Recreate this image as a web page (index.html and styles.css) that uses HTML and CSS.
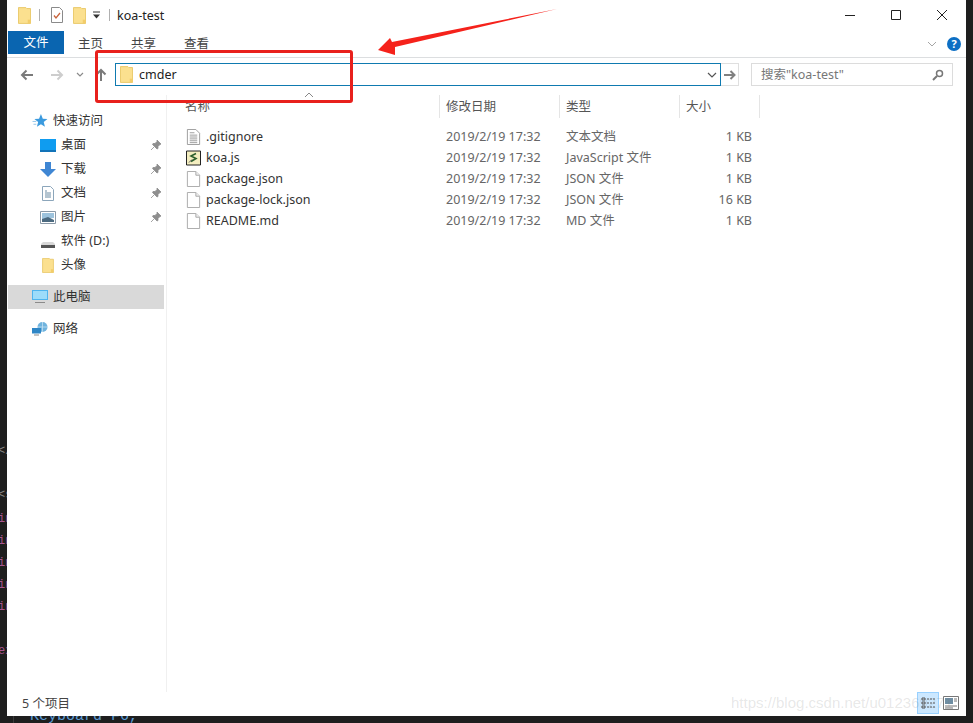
FILE: index.html
```html
<!DOCTYPE html>
<html>
<head>
  <title>koa-test</title>
  <link rel="stylesheet" href="styles.css">
</head>
<body>
  <svg class="defs" width="0" height="0">
    <symbol id="folder" viewBox="0 0 14 18">
      <path d="M.5.5h8l1 1h4v16H.5z" fill="#fbe08f" stroke="#e8c766"/>
      <path d="M10.500 13.500h3v4h-3z" fill="#f3cd6a"/>
    </symbol>
    <symbol id="doc" viewBox="0 0 14 17">
      <path d="M.5.5h9l4 4v12H.5z" fill="#fff" stroke="#a9a9a9"/>
      <path d="M9.500.5v4h4" fill="#eee" stroke="#a9a9a9"/>
    </symbol>
    <symbol id="textdoc" viewBox="0 0 14 17">
      <path d="M.5.5h9l4 4v12H.5z" fill="#fff" stroke="#9a9a9a"/>
      <path d="M3 4h5M3 6.500h8M3 8.500h8M3 10.500h8M3 12.500h8M3 14.500h8" stroke="#9a9a9a" fill="none"/>
    </symbol>
    <symbol id="pin" viewBox="0 0 12 12">
      <path d="M7 1l4 4-1 .5-2 2 0 2-1 .5L2.500 5.500 3 4.500h2l2-2zM4 8l-3 3" fill="#8e8e8e" stroke="#8e8e8e" stroke-width=".8"/>
    </symbol>
  </svg>

  <div class="code-strip">
    <span class="code-line code-grey code-gap">&lt;/</span>
    <span class="code-line code-grey code-gap-small">&lt;s</span>
    <span class="code-line">in</span>
    <span class="code-line">in</span>
    <span class="code-line">in</span>
    <span class="code-line">in</span>
    <span class="code-line code-gap">in</span>
    <span class="code-line">ex</span>
  </div>
  <div class="code-rule"></div>
  <div class="code-bottom">Keyboard F6,</div>

  <div class="window">
    <div class="titlebar">
      <svg class="qa-folder"><use href="#folder"/></svg>
      <span class="qa-sep"></span>
      <svg class="qa-check" viewBox="0 0 12 16">
        <path d="M.5.5h8l3 3v12H.5z" fill="#fff" stroke="#8a8a8a"/>
        <path d="M3 8.500l2 2.500L9 6" fill="none" stroke="#c8643c" stroke-width="1.300"/>
      </svg>
      <svg class="qa-folder2"><use href="#folder"/></svg>
      <svg class="qa-drop" viewBox="0 0 9 8">
        <path d="M1 1h7" stroke="#333" fill="none"/><path d="M1 3.500h7L4.500 7.500z" fill="#333"/>
      </svg>
      <span class="qa-sep qa-sep2"></span>
      <span class="title-text">koa-test</span>
      <div class="win-controls">
        <svg class="win-btn" viewBox="0 0 12 12"><path d="M1 6.500h10" stroke="#222" fill="none"/></svg>
        <svg class="win-btn" viewBox="0 0 12 12"><path d="M1.500 1.500h9v9h-9z" stroke="#222" fill="none"/></svg>
        <svg class="win-btn" viewBox="0 0 12 12"><path d="M1 1l10 10M11 1L1 11" stroke="#222" fill="none"/></svg>
      </div>
    </div>

    <div class="ribbon">
      <div class="ribbon-file">文件</div>
      <div class="ribbon-tab">主页</div>
      <div class="ribbon-tab">共享</div>
      <div class="ribbon-tab">查看</div>
      <div class="ribbon-right">
        <svg class="ribbon-chevron" viewBox="0 0 10 6"><path d="M1 1l4 4 4-4" stroke="#a5a5a5" fill="none"/></svg>
        <span class="help">?</span>
      </div>
    </div>

    <div class="addressbar">
      <svg class="nav-btn nav-back" viewBox="0 0 14 12"><path d="M13 6H2M6.500 1.500L2 6l4.500 4.500" stroke="#7a7a7a" stroke-width="2" fill="none"/></svg>
      <svg class="nav-btn nav-forward" viewBox="0 0 14 12"><path d="M1 6h11M7.500 1.500L12 6l-4.500 4.500" stroke="#cdcdcd" stroke-width="2" fill="none"/></svg>
      <svg class="nav-down" viewBox="0 0 8 5"><path d="M1 1l3 3 3-3" stroke="#8a8a8a" stroke-width="1.200" fill="none"/></svg>
      <svg class="nav-btn nav-up" viewBox="0 0 12 14"><path d="M6 13V2M1.500 6.500L6 2l4.500 4.500" stroke="#7a7a7a" stroke-width="2" fill="none"/></svg>
      <div class="address-input">
        <svg class="address-folder"><use href="#folder"/></svg>
        <span class="address-text">cmder</span>
        <svg class="address-chevron" viewBox="0 0 10 6"><path d="M1 1l4 4 4-4" stroke="#555" stroke-width="1.200" fill="none"/></svg>
      </div>
      <div class="address-go">
        <svg viewBox="0 0 12 10" width="12" height="10"><path d="M0 5h10M6.500 1L10.500 5l-4 4" stroke="#808080" stroke-width="2" fill="none"/></svg>
      </div>
      <div class="search">
        <span>搜索"koa-test"</span>
        <svg class="search-icon" viewBox="0 0 12 12"><circle cx="7.500" cy="4.500" r="3" stroke="#777" stroke-width="1.500" fill="none"/><path d="M5 7l-4 4" stroke="#777" stroke-width="2" fill="none"/></svg>
      </div>
    </div>

    <div class="main">
      <div class="sidebar">
        <div class="nav-item nav-top">
          <svg class="nav-icon" viewBox="0 0 16 15"><path d="M9 0l2 5 5 .4-4 3.300 1.300 5L9 11l-4.300 2.700 1.300-5-4-3.300 5-.4z" fill="#3b9ade"/><path d="M0 8h4M1 11h3" stroke="#8fc3ea"/></svg>
          <span>快速访问</span>
        </div>
        <div class="nav-item nav-sub">
          <svg class="nav-icon" viewBox="0 0 16 13"><path d="M0 0h16v13H0z" fill="#0f9cf0"/><path d="M0 11h16v2H0z" fill="#1273b8"/></svg>
          <span>桌面</span>
          <svg class="pin"><use href="#pin"/></svg>
        </div>
        <div class="nav-item nav-sub">
          <svg class="nav-icon" viewBox="0 0 16 15"><path d="M5 0h6v7h5l-8 8-8-8h5z" fill="#3f86d3"/></svg>
          <span>下载</span>
          <svg class="pin"><use href="#pin"/></svg>
        </div>
        <div class="nav-item nav-sub">
          <svg class="nav-icon" viewBox="0 0 16 15"><path d="M2.500.5h8l3 3v11h-11z" fill="#fff" stroke="#8ca6bb"/><path d="M5 5h2M5 7h6M5 9h6M5 11h6" stroke="#6b8ba3"/></svg>
          <span>文档</span>
          <svg class="pin"><use href="#pin"/></svg>
        </div>
        <div class="nav-item nav-sub">
          <svg class="nav-icon" viewBox="0 0 16 13"><path d="M.5.500h15v12H.5z" fill="#fff" stroke="#8b9aa8"/><path d="M2 2h12v5l-12 1z" fill="#9dc3dd"/><path d="M2 8l6-2 6 3v2H2z" fill="#4c6a80"/></svg>
          <span>图片</span>
          <svg class="pin"><use href="#pin"/></svg>
        </div>
        <div class="nav-item nav-sub">
          <svg class="nav-icon" viewBox="0 0 16 15"><path d="M3 8h10l2 2v4H1v-4z" fill="#d8d8d8"/><path d="M1 11h14v3H1z" fill="#555"/></svg>
          <span>软件 (D:)</span>
        </div>
        <div class="nav-item nav-sub">
          <svg class="nav-icon"><use href="#folder"/></svg>
          <span>头像</span>
        </div>
        <div class="nav-item nav-top nav-selected">
          <svg class="nav-icon" viewBox="0 0 16 14"><path d="M0 0h16v10H0z" fill="#4fb4ee"/><path d="M1 1h14v8H1z" fill="#9ddcfa"/><path d="M3 12h10v1H3z" fill="#8b8b8b"/></svg>
          <span>此电脑</span>
        </div>
        <div class="nav-item nav-top nav-network">
          <svg class="nav-icon" viewBox="0 0 16 14"><circle cx="10.500" cy="5" r="5" fill="#6fb3de"/><path d="M5.500 5h10M10.500 0v10" stroke="#cfe6f5" stroke-width=".7"/><path d="M0 6h9v5.500H0z" fill="#2f86c6"/><path d="M2 13h5" stroke="#888"/></svg>
          <span>网络</span>
        </div>
      </div>

      <div class="content">
        <div class="list-head">
          <div class="head-name">名称</div>
          <div class="head-cell">修改日期</div>
          <div class="head-cell">类型</div>
          <div class="head-cell">大小</div>
        </div>
        <div class="file-row">
          <div class="file-name"><svg class="file-icon"><use href="#textdoc"/></svg>.gitignore</div>
          <div>2019/2/19 17:32</div><div>文本文档</div><div class="file-size">1 KB</div>
        </div>
        <div class="file-row">
          <div class="file-name">
            <svg class="file-icon" viewBox="0 0 15 15"><path d="M.5.500h14v14H.5z" fill="#f4eec0" stroke="#222"/><path d="M10 3L5 5.500l5 2.500-5 3" stroke="#2d5f2d" stroke-width="1.600" fill="none"/><path d="M3 12l3-3" stroke="#555"/></svg>koa.js
          </div>
          <div>2019/2/19 17:32</div><div>JavaScript 文件</div><div class="file-size">1 KB</div>
        </div>
        <div class="file-row">
          <div class="file-name"><svg class="file-icon"><use href="#doc"/></svg>package.json</div>
          <div>2019/2/19 17:32</div><div>JSON 文件</div><div class="file-size">1 KB</div>
        </div>
        <div class="file-row">
          <div class="file-name"><svg class="file-icon"><use href="#doc"/></svg>package-lock.json</div>
          <div>2019/2/19 17:32</div><div>JSON 文件</div><div class="file-size">16 KB</div>
        </div>
        <div class="file-row">
          <div class="file-name"><svg class="file-icon"><use href="#doc"/></svg>README.md</div>
          <div>2019/2/19 17:32</div><div>MD 文件</div><div class="file-size">1 KB</div>
        </div>
      </div>
    </div>

    <div class="statusbar">
      <span class="status-text">5 个项目</span>
      <div class="view-btns">
        <div class="view-btn view-active">
          <svg viewBox="0 0 16 16" width="16" height="16"><path d="M2 3h3v2H2zM2 7h3v2H2zM2 11h3v2H2z" fill="none" stroke="#555"/><path d="M7 4h8M7 8h8M7 12h8" stroke="#555" stroke-dasharray="2 1"/></svg>
        </div>
        <div class="view-btn">
          <svg viewBox="0 0 16 14" width="16" height="14"><path d="M.5.500h15v13H.5z" fill="#fff" stroke="#777"/><path d="M2 2h8v6H2z" fill="#6f8ea3"/><path d="M11 3h3M11 5h3M2 10h12M2 12h8" stroke="#777"/></svg>
        </div>
      </div>
    </div>
  </div>

  <!-- annotations drawn on top of the screenshot -->
  <div class="mark-box"></div>
  <svg class="mark-arrow" viewBox="0 0 180 48" width="180" height="48">
    <path d="M179 1L14 34 12 30 0 42 17 47 17 39z" fill="#f5221b"/>
  </svg>
  <div class="sort-caret">
    <svg viewBox="0 0 10 6" width="10" height="6"><path d="M1 5l4-4 4 4" stroke="#888" fill="none"/></svg>
  </div>
  <div class="watermark">https://blog.csdn.net/u012369271</div>
</body>
</html>
```

FILE: styles.css
```css
html, body {
  height: 100%;
}
body {
  margin: 0;
  position: relative;
  overflow: hidden;
  background-color: #1e1e1e;
  font-family: "Noto Sans", "Noto Sans CJK SC", sans-serif;
  font-size: 12.5px;
  line-height: 16px;
  color: #444;
}
.defs {
  position: absolute;
}
svg {
  display: block;
  flex: none;
}

/* editor behind the window */
.code-strip {
  position: absolute;
  left: -2px;
  top: 440px;
  width: 14px;
  font-family: "Liberation Mono", monospace;
  font-size: 12px;
  line-height: 22px;
  color: #a8558f;
  display: flex;
  flex-direction: column;
}
.code-line {
  height: 22px;
  white-space: nowrap;
}
.code-grey {
  color: #888;
}
.code-gap {
  margin-bottom: 22px;
}
.code-gap-small {
  margin-bottom: 2px;
}
.code-rule {
  position: absolute;
  left: 13px;
  top: 716px;
  width: 1px;
  height: 7px;
  background-color: #3a3a3a;
}
.code-bottom {
  position: absolute;
  left: 30px;
  top: 708px;
  font-family: "Liberation Mono", monospace;
  font-size: 15px;
  line-height: 18px;
  color: #5b9bd5;
}

.window {
  position: relative;
  margin-left: 7px;
  width: 959px;
  height: 716px;
  background-color: #fff;
  display: flex;
  flex-direction: column;
}

/* title bar */
.titlebar {
  height: 30px;
  display: flex;
  align-items: center;
  flex: none;
}
.qa-folder {
  width: 13px;
  height: 17px;
  margin-left: 11px;
}
.qa-sep {
  width: 1px;
  height: 12px;
  background-color: #b0b0b0;
  margin-left: 8px;
}
.qa-check {
  width: 12px;
  height: 16px;
  margin-left: 11px;
}
.qa-folder2 {
  width: 13px;
  height: 17px;
  margin-left: 10px;
}
.qa-drop {
  width: 9px;
  height: 8px;
  margin-left: 6px;
}
.qa-sep2 {
  margin-left: 8px;
}
.title-text {
  margin-left: 7px;
  margin-top: 2px;
  color: #222;
}
.win-controls {
  margin-left: auto;
  margin-right: 18px;
  display: flex;
  gap: 34px;
}
.win-btn {
  width: 12px;
  height: 12px;
}

/* ribbon */
.ribbon {
  height: 28px;
  flex: none;
  display: flex;
  border-bottom: 1px solid #dcdee0;
  box-sizing: border-box;
  padding-left: 1px;
}
.ribbon-file {
  width: 56px;
  height: 23px;
  margin-top: 1px;
  background-color: #0a65b0;
  color: #fff;
  text-align: center;
  line-height: 23px;
}
.ribbon-tab {
  width: 53px;
  text-align: center;
  line-height: 27px;
  color: #444;
}
.ribbon-right {
  margin-left: auto;
  margin-right: 5px;
  display: flex;
  align-items: center;
  gap: 10px;
  height: 27px;
}
.ribbon-chevron {
  width: 10px;
  height: 6px;
}
.help {
  width: 14px;
  height: 14px;
  border-radius: 50%;
  background-color: #0d6fc4;
  color: #fff;
  font-size: 11px;
  font-weight: 700;
  line-height: 14px;
  text-align: center;
}

/* address row */
.addressbar {
  height: 37px;
  flex: none;
  display: flex;
  align-items: center;
  padding-top: 1px;
  box-sizing: border-box;
  padding-bottom: 5px;
}
.nav-btn {
  width: 14px;
  height: 12px;
}
.nav-back {
  margin-left: 13px;
}
.nav-forward {
  margin-left: 16px;
}
.nav-down {
  width: 8px;
  height: 5px;
  margin-left: 12px;
}
.nav-up {
  width: 12px;
  height: 14px;
  margin-left: 11px;
}
.address-input {
  width: 606px;
  height: 23px;
  margin-left: 8px;
  border: 1px solid #0f7ab0;
  box-sizing: border-box;
  display: flex;
  align-items: center;
}
.address-folder {
  width: 13px;
  height: 17px;
  margin-left: 4px;
}
.address-text {
  margin-left: 6px;
  color: #222;
}
.address-chevron {
  width: 10px;
  height: 6px;
  margin-left: auto;
  margin-right: 3px;
}
.address-go {
  width: 18px;
  height: 23px;
  box-sizing: border-box;
  border: 1px solid #dfdfdf;
  border-left: none;
  display: flex;
  align-items: center;
  justify-content: center;
}
.search {
  width: 202px;
  height: 23px;
  margin-left: 12px;
  box-sizing: border-box;
  border: 1px solid #dcdcdc;
  display: flex;
  align-items: center;
  padding: 0 8px 0 9px;
  color: #777;
}
.search-icon {
  width: 12px;
  height: 12px;
  margin-left: auto;
}

/* main area */
.main {
  flex: 1;
  display: flex;
  min-height: 0;
}
.sidebar {
  width: 159px;
  flex: none;
  padding-top: 14px;
  border-right: 1px solid #f0f0f0;
}
.nav-item {
  height: 24px;
  display: flex;
  align-items: center;
  width: 156px;
  color: #333;
  margin-left: 1px;
}
.nav-top {
  padding-left: 24px;
  box-sizing: border-box;
}
.nav-top .nav-icon {
  width: 16px;
  height: 14px;
  margin-right: 5px;
}
.nav-sub {
  padding-left: 32px;
  box-sizing: border-box;
}
.nav-sub .nav-icon {
  width: 16px;
  height: 15px;
  margin-right: 5px;
}
.nav-selected {
  background-color: #d9d9d9;
  margin-top: 8px;
}
.nav-network {
  margin-top: 8px;
}
.pin {
  width: 12px;
  height: 12px;
  margin-left: auto;
  margin-right: 2px;
}

/* file list */
.content {
  flex: 1;
  min-width: 0;
}
.list-head {
  display: grid;
  grid-template-columns: 272px 120px 120px 81px;
  height: 23px;
  margin-bottom: 8px;
  color: #555;
}
.head-name {
  padding-left: 18px;
  line-height: 23px;
}
.head-cell {
  padding-left: 6px;
  line-height: 23px;
  border-left: 1px solid #e5e5e5;
}
.head-cell:last-child {
  border-right: 1px solid #e5e5e5;
}
.file-row {
  display: grid;
  grid-template-columns: 272px 120px 120px 73px;
  height: 21px;
  align-items: center;
  color: #666;
}
.file-row > div:not(.file-name):not(.file-size) {
  padding-left: 7px;
}
.file-name {
  display: flex;
  align-items: center;
  padding-left: 19px;
  color: #333;
}
.file-icon {
  width: 15px;
  height: 16px;
  margin-right: 5px;
}
.file-size {
  text-align: right;
}

/* status bar */
.statusbar {
  height: 24px;
  flex: none;
  display: flex;
  align-items: center;
  padding-left: 15px;
  padding-bottom: 2px;
  box-sizing: border-box;
}
.status-text {
  margin-top: 2px;
}
.view-btns {
  margin-left: auto;
  margin-right: 4px;
  display: flex;
  gap: 1px;
}
.view-btn {
  width: 22px;
  height: 22px;
  display: flex;
  align-items: center;
  justify-content: center;
  box-sizing: border-box;
}
.view-active {
  background-color: #cce8ff;
  border: 1px solid #99d1ff;
}

/* annotations */
.mark-box {
  position: absolute;
  left: 95px;
  top: 50px;
  width: 258px;
  height: 53px;
  box-sizing: border-box;
  border: 3px solid #e8201c;
  border-radius: 3px;
}
.mark-arrow {
  position: absolute;
  left: 378px;
  top: 8px;
}
.sort-caret {
  position: absolute;
  left: 304px;
  top: 92px;
}
.watermark {
  position: absolute;
  left: 731px;
  top: 695px;
  font-family: "Liberation Sans", sans-serif;
  font-size: 15px;
  color: rgba(120, 120, 120, 0.18);
  white-space: nowrap;
}
```
